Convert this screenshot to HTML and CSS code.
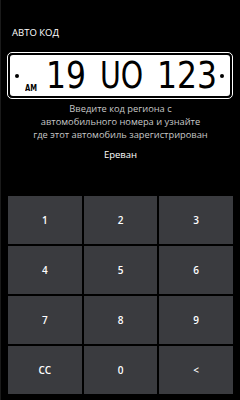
FILE: index.html
```html
<!DOCTYPE html>
<html>
<head>
	<title>Авто код</title>
	<meta charset="utf-8">
	<link rel="stylesheet" href="styles.css">
</head>
<body>
	<div class="app">
		<div class="title">АВТО КОД</div>
		<div class="plate">
			<div class="plate-inner">
				<span class="dot"></span>
				<span class="country">AM</span>
				<span class="num n1"><span class="glyphs">19</span></span>
				<span class="num n2"><span class="glyphs">UO</span></span>
				<span class="num n3"><span class="glyphs">123</span></span>
				<span class="dot"></span>
			</div>
		</div>
		<div class="desc">Введите код региона с<br>автомобильного номера и узнайте<br>где этот автомобиль зарегистрирован</div>
		<div class="city">Ереван</div>
		<div class="keys">
			<div class="key">1</div>
			<div class="key">2</div>
			<div class="key">3</div>
			<div class="key">4</div>
			<div class="key">5</div>
			<div class="key">6</div>
			<div class="key">7</div>
			<div class="key">8</div>
			<div class="key">9</div>
			<div class="key">CC</div>
			<div class="key">0</div>
			<div class="key">&lt;</div>
		</div>
	</div>
</body>
</html>
```

FILE: styles.css
```css
html,body,div,span{margin:0;padding:0;}
body{background:#000;color:#fff;font-family:"Open Sans","Noto Sans",sans-serif;}
.app{width:240px;height:400px;border-left:1px solid #1a1a1a;box-sizing:border-box;overflow:hidden;}
.title{padding:27px 0 0 11px;font-size:9.5px;line-height:12px;}
.plate{margin:13px 7px 0 6px;height:47px;box-sizing:border-box;border:1.5px solid #fff;border-radius:5px;padding:2px;}
.plate-inner{height:100%;background:#fff;border-radius:3px;color:#000;display:flex;align-items:center;padding:0 0 0 5px;box-sizing:border-box;font-family:"DejaVu Sans",sans-serif;}
.dot{width:4px;height:4px;border-radius:50%;background:#000;flex:none;}
.country{font-size:8px;font-weight:bold;align-self:flex-end;margin:0 0 3px 6px;width:16px;transform:scaleX(0.85);transform-origin:left;}
.num{font-size:37px;line-height:38px;flex:none;white-space:nowrap;}
.glyphs{display:inline-block;transform:scaleX(0.85);transform-origin:left;}
.n1{margin-left:5px;width:54px;}
.n2{width:57px;}
.n2 .glyphs{transform:scaleX(0.77);}
.n3{width:63px;}
.desc{margin-top:3px;text-align:center;font-size:9.3px;line-height:13px;color:#c8c8c8;}
.city{margin-top:7px;text-align:center;font-size:9.5px;line-height:13px;}
.keys{margin:35px 7px 0 7px;display:grid;grid-template-columns:repeat(3,1fr);grid-auto-rows:48px;gap:2px;}
.key{background:#3a3b3f;display:flex;align-items:center;justify-content:center;font-size:10px;font-weight:600;}
```
